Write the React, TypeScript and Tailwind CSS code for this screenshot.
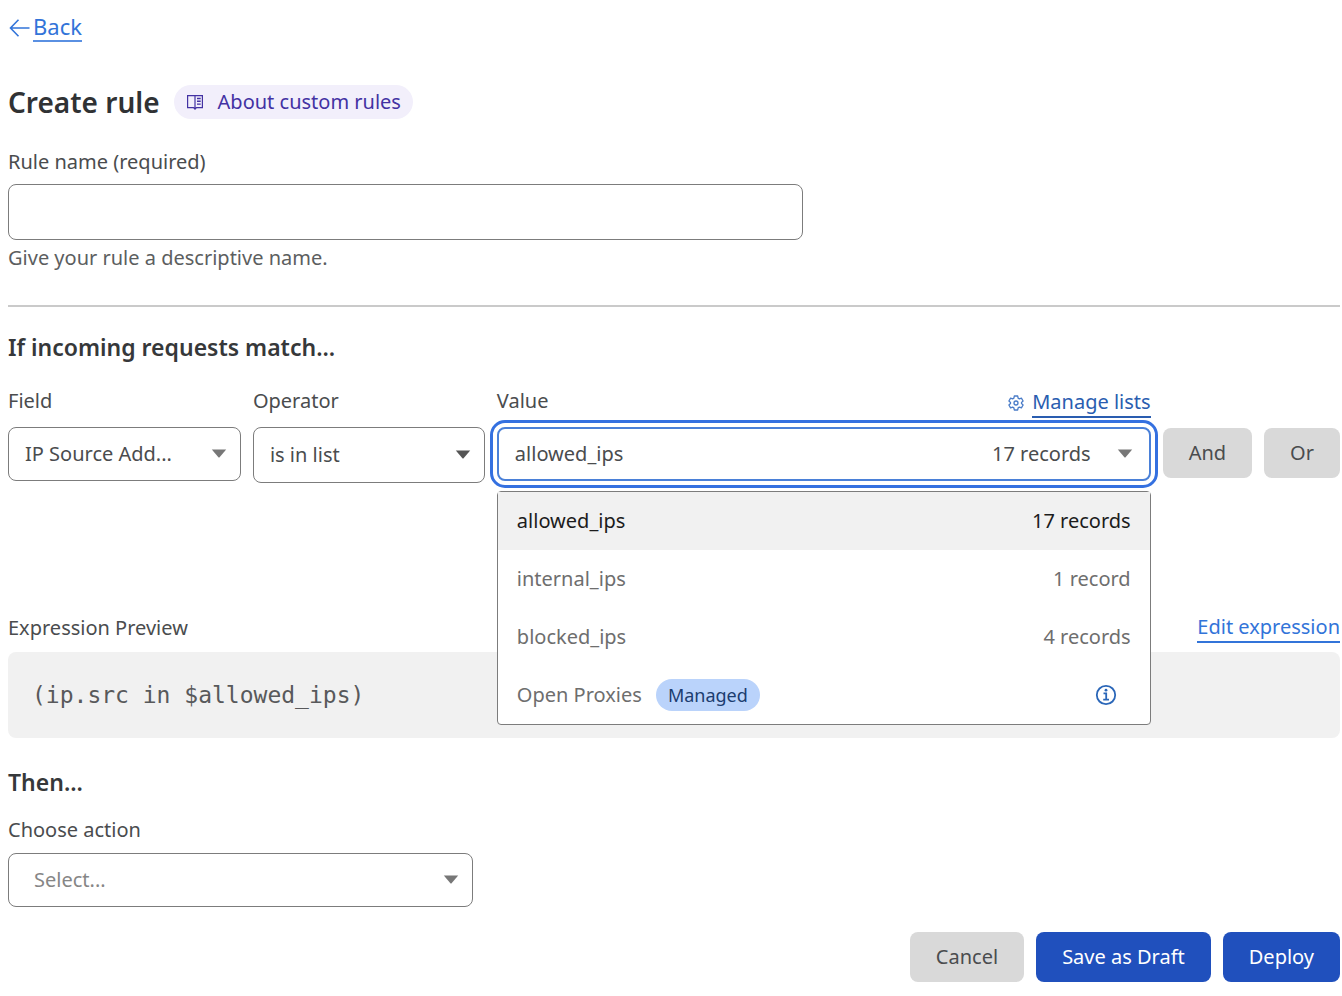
import { useState } from "react";
import type { ReactNode } from "react";
import clsx from "clsx";

const lists = [
  { name: "allowed_ips", count: "17 records", managed: false },
  { name: "internal_ips", count: "1 record", managed: false },
  { name: "blocked_ips", count: "4 records", managed: false },
  { name: "Open Proxies", count: "", managed: true },
];

export default function App() {
  const [selected, setSelected] = useState(0);
  const [open, setOpen] = useState(true);

  return (
    <main className="bg-white pt-3 pb-3 pl-2 pr-0.5 font-['Noto_Sans','Open_Sans',sans-serif] text-[20px] leading-7 text-[#4a4c4e]">
      <a href="#rules" className="inline-flex items-center text-[22px] text-[#3274d9]">
        <ArrowLeft />
        <span className="border-b-2 border-[#5a90e2]">Back</span>
      </a>

      {/* Title */}
      <div className="mt-9 flex items-center gap-3.5">
        <h1 className="text-[28px] font-semibold leading-10 text-[#303234]">Create rule</h1>
        <a
          href="#about"
          className="flex items-center gap-3.5 rounded-full bg-[#f2effb] px-3 py-[3px] text-[#4332a3]"
        >
          <BookIcon />
          About custom rules
        </a>
      </div>

      {/* Rule name */}
      <div className="mt-[26px] max-w-[795px]">
        <label htmlFor="rule-name" className="block">Rule name (required)</label>
        <input
          id="rule-name"
          type="text"
          aria-describedby="rule-name-help"
          className="mt-2 block h-14 w-full rounded-lg border border-[#7c7c7c] px-4"
        />
        <p id="rule-name-help" className="mt-1 text-[#5c5e60]">Give your rule a descriptive name.</p>
      </div>

      <hr className="mt-[33px] border-t-2 border-[#cacaca]" />

      <h2 className="mt-[26px] text-[23px] font-semibold leading-7 text-[#36383a]">If incoming requests match...</h2>

      <div className="mt-[26px] grid grid-cols-[233fr_232fr_654fr_auto_auto] gap-x-3">
        <div>
          <label htmlFor="field" className="block">Field</label>
          <SelectBox id="field" className="mt-3 h-[54px]">
            <option>IP Source Add...</option>
          </SelectBox>
        </div>

        <div>
          <label htmlFor="operator" className="block">Operator</label>
          <SelectBox id="operator" dark className="mt-3 h-14">
            <option>is in list</option>
            <option>is not in list</option>
          </SelectBox>
        </div>

        <div>
          <div className="flex h-7 items-start justify-between">
            <span id="value-label">Value</span>
            <a href="#lists" className="flex items-center gap-2 pt-px text-[#2a5db0]">
              <GearIcon />
              <span className="border-b-2 border-[#2a5db0]">Manage lists</span>
            </a>
          </div>
          <div className="relative mt-3">
            <button
              type="button"
              aria-haspopup="listbox"
              aria-expanded={open}
              aria-labelledby="value-label"
              onClick={() => setOpen(!open)}
              className="flex h-[54px] w-full items-center rounded-lg border-2 border-[#4a80d8] bg-white px-4 outline-3 outline-offset-4 outline-[#3470e0]"
            >
              <span>{lists[selected].name}</span>
              <span className="ml-auto mr-[26px]">{lists[selected].count}</span>
              <Caret className="text-[#777777]" />
            </button>

            {open && (
              <ul
                role="listbox"
                aria-labelledby="value-label"
                className="absolute inset-x-0 top-16 z-10 rounded-sm border border-[#7c7c7c] bg-white text-[#6e6e6e]"
              >
                {lists.map((list, i) => (
                  <li
                    key={list.name}
                    role="option"
                    aria-selected={i === selected}
                    onClick={() => {
                      setSelected(i);
                      setOpen(false);
                    }}
                    className={clsx(
                      "flex h-[58px] cursor-pointer items-center px-[19px]",
                      i === selected && "bg-[#f1f1f1] text-[#1c1c1c]"
                    )}
                  >
                    <span>{list.name}</span>
                    {list.managed && (
                      <span className="ml-3.5 rounded-full bg-[#bad3fb] px-3 py-0.5 text-[18px] text-[#1c3d70]">
                        Managed
                      </span>
                    )}
                    {list.managed ? <InfoIcon /> : <span className="ml-auto">{list.count}</span>}
                  </li>
                ))}
              </ul>
            )}
          </div>
        </div>

        <Button className="mt-[41px] self-start bg-[#d9d9d9]">And</Button>
        <Button className="mt-[41px] self-start bg-[#d9d9d9]">Or</Button>
      </div>

      {/* Expression preview */}
      <div className="mt-[130px] flex items-center justify-between">
        <span>Expression Preview</span>
        <a href="#edit" className="border-b-2 border-[#3274d9] text-[#3274d9]">Edit expression</a>
      </div>
      <pre className="mt-[9px] rounded-lg bg-[#f1f1f1] px-6 py-[29px] font-['DejaVu_Sans_Mono',monospace] text-[23px] leading-7 text-[#58595b]">
        (ip.src in $allowed_ips)
      </pre>

      <h2 className="mt-[30px] text-[23px] font-semibold leading-7 text-[#36383a]">Then...</h2>
      <div className="mt-5 max-w-[465px]">
        <label htmlFor="action" className="block">Choose action</label>
        <SelectBox id="action" placeholder className="mt-[9px] h-[54px]">
          <option>Select...</option>
          <option>Block</option>
        </SelectBox>
      </div>

      <div className="mt-[25px] flex justify-end gap-3">
        <Button className="bg-[#d9d9d9]">Cancel</Button>
        <Button className="bg-[#2050bd] text-white">Save as Draft</Button>
        <Button className="bg-[#2050bd] text-white">Deploy</Button>
      </div>
    </main>
  );
}

function Button({ className, children }: { className?: string; children: ReactNode }) {
  return (
    <button type="button" className={clsx("h-[50px] rounded-lg px-[26px]", className)}>
      {children}
    </button>
  );
}

function SelectBox({
  id,
  className,
  dark,
  placeholder,
  children,
}: {
  id: string;
  className?: string;
  dark?: boolean;
  placeholder?: boolean;
  children: ReactNode;
}) {
  return (
    <div className={clsx("relative", className)}>
      <select
        id={id}
        className={clsx(
          "h-full w-full appearance-none rounded-lg border border-[#7c7c7c] bg-white pr-10",
          placeholder ? "pl-[25px] text-[#868686]" : "pl-4"
        )}
      >
        {children}
      </select>
      <Caret
        className={clsx(
          "pointer-events-none absolute right-3.5 top-1/2 -translate-y-1/2",
          dark ? "text-[#555555]" : "text-[#777777]"
        )}
      />
    </div>
  );
}

function Caret({ className }: { className?: string }) {
  return (
    <svg width="16" height="12" viewBox="0 0 16 12" fill="currentColor" className={className} aria-hidden="true">
      <path d="M.8 1.5h14.4L8.6 9.2a.8.8 0 0 1-1.2 0z" />
    </svg>
  );
}

function ArrowLeft() {
  return (
    <svg width="25" height="24" viewBox="0 0 25 24" fill="none" stroke="currentColor" strokeWidth="1.6" aria-hidden="true">
      <path d="M21.500 13H3M10.500 4.800L2.500 13l8 8.200" />
    </svg>
  );
}

function BookIcon() {
  return (
    <svg width="18" height="18" viewBox="0 0 18 18" fill="none" stroke="currentColor" strokeWidth="1.2" aria-hidden="true">
      <path d="M1.600 2.600h14.800v12H10.500L9 16.200l-1.500-1.600H1.600zM9 2.600v13.400" />
      <path d="M11 5.500h3.700M11 8.300h3.700M11 11.100h3.700" strokeWidth="1.4" />
    </svg>
  );
}

function GearIcon() {
  return (
    <svg width="16" height="16" viewBox="0 0 16 16" fill="none" stroke="#4a7cc8" strokeWidth="1.3" strokeLinejoin="round" aria-hidden="true">
      <path d="M6.300 1h3.400l.4 2.100 1.300.75 2-.75 1.700 2.950-1.600 1.350v1.200l1.600 1.350-1.700 2.950-2-.75-1.300.75-.4 2.100H6.300l-.4-2.100-1.300-.75-2 .75-1.700-2.950L2.500 8.600V7.400L.9 6.050 2.600 3.100l2 .75 1.300-.75z" />
      <circle cx="8" cy="8" r="2" />
    </svg>
  );
}

function InfoIcon() {
  return (
    <svg width="22" height="22" viewBox="0 0 22 22" fill="none" className="ml-auto mr-3.5 text-[#2a66b8]" role="img" aria-label="About managed list">
      <circle cx="11" cy="11" r="9.200" stroke="currentColor" strokeWidth="1.8" />
      <path d="M8.500 9.300h2.700v6.200M8.200 15.600h5.800" stroke="currentColor" strokeWidth="1.800" />
      <circle cx="11" cy="6.200" r="1.400" fill="currentColor" />
    </svg>
  );
}
